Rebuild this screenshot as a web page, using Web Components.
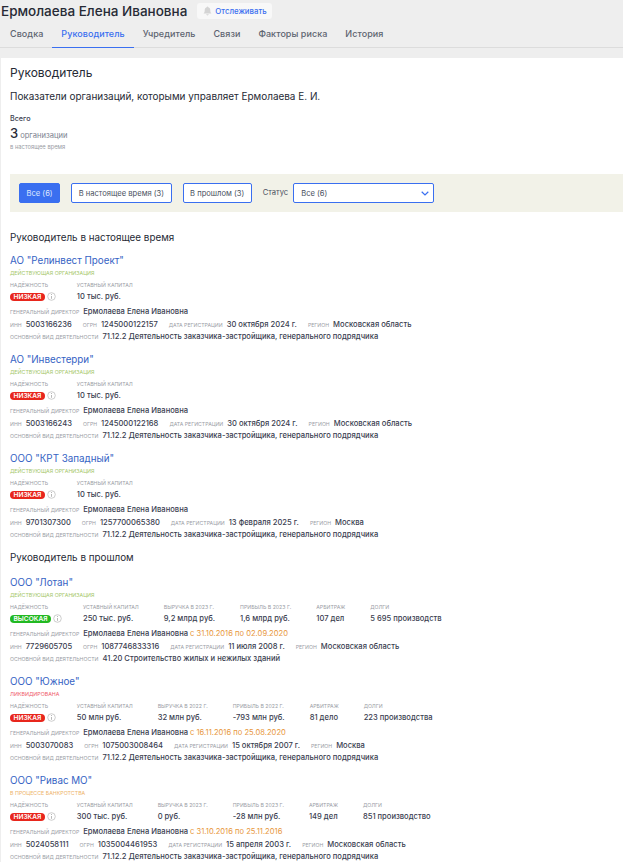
<!DOCTYPE html>
<html lang="ru">
<head>
<meta charset="utf-8">
<style>
    html, body { margin: 0; height: 862px; overflow: hidden; background: #eeeeee; }
    body { font-family: "Inter", "Noto Sans", sans-serif; color: #1f2433; }
</style>
</head>
<body>
<person-page></person-page>
<script>
const BLUE = "#3a6ff0";

class PersonHeader extends HTMLElement {
    connectedCallback() {
        this.shadow = this.attachShadow({ mode: "open" });
        this.shadow.innerHTML = `
            <style>
                :host { display: block; height: 48px; border-bottom: 1px solid #dcdcdc; box-sizing: border-box; }
                .top { display: flex; align-items: center; height: 22px; padding-left: 1px; padding-top: 0; }
                h1 { margin: 0; font-size: 13.5px; font-weight: 500; color: #262a35; white-space: nowrap; }
                .watch { display: flex; align-items: center; gap: 3px; margin-left: 10px; height: 16px; padding: 0 5px 0 6px; background: #f8f8f8; border-radius: 3px; font-size: 7.8px; font-weight: 500; color: ${BLUE}; }
                svg { display: block; }
                nav { display: flex; height: 25px; padding: 0 0 0 1px; }
                a { display: block; padding: 6px 9px 0; height: 19px; font-size: 9px; font-weight: 500; letter-spacing: .05px; color: #5d6470; }
                a.on { color: ${BLUE}; border-bottom: 1px solid ${BLUE}; }
            </style>
            <div class="top">
                <h1>Ермолаева Елена Ивановна</h1>
                <span class="watch">
                    <svg width="9" height="10" viewBox="0 0 9 10"><path fill="#d4d4d4" d="M4.5 0.5c.5 0 .8.3.8.8C6.6 1.7 7.3 2.8 7.3 4.2c0 1.7.4 2.6 1.2 3.4H.5c.8-.8 1.2-1.7 1.2-3.4 0-1.4.7-2.5 2-2.9 0-.5.3-.8.8-.8zM3.3 8.3h2.4c0 .7-.5 1.2-1.2 1.2s-1.2-.5-1.2-1.2z"/></svg>
                    Отслеживать
                </span>
            </div>
            <nav>
                <a>Сводка</a><a class="on">Руководитель</a><a>Учредитель</a><a>Связи</a><a>Факторы риска</a><a>История</a>
            </nav>
        `;
    }
}

class FilterBar extends HTMLElement {
    connectedCallback() {
        this.shadow = this.attachShadow({ mode: "open" });
        this.shadow.innerHTML = `
            <style>
                :host { display: flex; align-items: center; height: 38px; margin-left: 9px; padding-left: 9px; background: #f2f2e8; font-size: 7.6px; }
                button { font: inherit; height: 20px; box-sizing: border-box; padding: 0 6.5px; border: 1px solid ${BLUE}; border-radius: 2px; background: #fff; color: #4a5160; margin-right: 11px; white-space: nowrap; }
                button.on { background: ${BLUE}; color: #dfe8ff; }
                .lbl { color: #4a5160; margin: 0 5px 2px 0; }
                .sel { display: flex; align-items: center; justify-content: space-between; width: 141px; height: 20px; box-sizing: border-box; padding: 0 4px 0 7px; border: 1px solid ${BLUE}; border-radius: 2px; background: #fff; color: #4a5160; }
            </style>
            <button class="on">Все (6)</button>
            <button>В настоящее время (3)</button>
            <button>В прошлом (3)</button>
            <span class="lbl">Статус</span>
            <span class="sel">Все (6)
                <svg width="8" height="5" viewBox="0 0 8 5"><path fill="none" stroke="${BLUE}" stroke-width="1.2" d="M.7.8 4 4 7.3.8"/></svg>
            </span>
        `;
    }
}

class OrgCard extends HTMLElement {
    connectedCallback() {
        const data = JSON.parse(this.getAttribute("data"));
        const metrics = data.metrics.map(m => `<div><label>${m[0]}</label><b>${m[1]}</b></div>`).join("");
        const high = data.risk === "ВЫСОКАЯ";
        this.shadow = this.attachShadow({ mode: "open" });
        this.shadow.innerHTML = `
            <style>
                :host { display: block; height: 99px; box-sizing: border-box; padding-top: 2px; font-size: 7.6px; font-weight: 500; color: #3a4050; }
                .name { font-size: 9.8px; font-weight: 400; line-height: 13px; color: #3563c4; }
                .status { font-size: 5.3px; font-weight: 400; line-height: 10px; height: 12px; margin-top: 1px; text-transform: uppercase; color: ${data.color}; }
                label { font-size: 5.2px; font-weight: 400; color: #9a9da5; text-transform: uppercase; white-space: nowrap; }
                .metrics { display: flex; gap: 25px; height: 26px; }
                .metrics label { display: block; line-height: 10px; }
                .metrics b { display: block; font-weight: 500; line-height: 13px; white-space: nowrap; }
                .risk { display: flex; align-items: center; gap: 2px; height: 13px; margin-right: -4px; }
                .badge { height: 8px; line-height: 8px; padding: 0 3.5px; border-radius: 4px; font-size: 6.6px; font-weight: 600; color: #fff; background: ${high ? "#22b922" : "#e8261c"}; white-space: nowrap; }
                .row { display: flex; align-items: baseline; gap: 11px; height: 12.5px; line-height: 12.5px; white-space: nowrap; }
                .row span { display: flex; align-items: baseline; gap: 4px; }
                em { font-style: normal; color: #e8973c; font-weight: 400; margin-left: -2px; }
                svg { display: block; }
            </style>
            <div class="name">${data.name}</div>
            <div class="status">${data.status}</div>
            <div class="metrics">
                <div><label>Надёжность</label><div class="risk"><span class="badge">${data.risk}</span>
                    <svg width="9" height="9" viewBox="0 0 9 9"><circle cx="4.5" cy="4.5" r="3.8" fill="none" stroke="#b8b8b8" stroke-width=".7"/><path stroke="#b8b8b8" d="M4.5 4v2.8M4.5 2v1"/></svg></div></div>
                ${metrics}
            </div>
            <div class="row"><span><label>Генеральный директор</label>Ермолаева Елена Ивановна ${data.period ? `<em>${data.period}</em>` : ""}</span></div>
            <div class="row">
                <span><label>ИНН</label>${data.inn}</span>
                <span><label>ОГРН</label>${data.ogrn}</span>
                <span><label>Дата регистрации</label>${data.date}</span>
                <span><label>Регион</label>${data.region}</span>
            </div>
            <div class="row"><span><label>Основной вид деятельности</label>${data.okved}</span></div>
        `;
    }
}

const OKVED = "71.12.2 Деятельность заказчика-застройщика, генерального подрядчика";
const GREEN = "#a5c76a", RED = "#ef5a6a", ORANGE = "#eeb36a";
const ORGS_NOW = [
    { name: 'АО "Релинвест Проект"', status: "Действующая организация", color: GREEN, risk: "НИЗКАЯ", metrics: [["Уставный капитал", "10 тыс. руб."]], inn: "5003166236", ogrn: "1245000122157", date: "30 октября 2024 г.", region: "Московская область", okved: OKVED },
    { name: 'АО "Инвестерри"', status: "Действующая организация", color: GREEN, risk: "НИЗКАЯ", metrics: [["Уставный капитал", "10 тыс. руб."]], inn: "5003166243", ogrn: "1245000122168", date: "30 октября 2024 г.", region: "Московская область", okved: OKVED },
    { name: 'ООО "КРТ Западный"', status: "Действующая организация", color: GREEN, risk: "НИЗКАЯ", metrics: [["Уставный капитал", "10 тыс. руб."]], inn: "9701307300", ogrn: "1257700065380", date: "13 февраля 2025 г.", region: "Москва", okved: OKVED }
];
const ORGS_PAST = [
    { name: 'ООО "Лотан"', status: "Действующая организация", color: GREEN, risk: "ВЫСОКАЯ", metrics: [["Уставный капитал", "250 тыс. руб."], ["Выручка в 2023 г.", "9,2 млрд руб."], ["Прибыль в 2023 г.", "1,6 млрд руб."], ["Арбитраж", "107 дел"], ["Долги", "5 695 производств"]], period: "с 31.10.2016 по 02.09.2020", inn: "7729605705", ogrn: "1087746833316", date: "11 июля 2008 г.", region: "Московская область", okved: "41.20 Строительство жилых и нежилых зданий" },
    { name: 'ООО "Южное"', status: "Ликвидирована", color: RED, risk: "НИЗКАЯ", metrics: [["Уставный капитал", "50 млн руб."], ["Выручка в 2022 г.", "32 млн руб."], ["Прибыль в 2022 г.", "-793 млн руб."], ["Арбитраж", "81 дело"], ["Долги", "223 производства"]], period: "с 16.11.2016 по 25.08.2020", inn: "5003070083", ogrn: "1075003008464", date: "15 октября 2007 г.", region: "Москва", okved: OKVED },
    { name: 'ООО "Ривас МО"', status: "В процессе банкротства", color: ORANGE, risk: "НИЗКАЯ", metrics: [["Уставный капитал", "300 тыс. руб."], ["Выручка в 2023 г.", "0 руб."], ["Прибыль в 2023 г.", "-28 млн руб."], ["Арбитраж", "149 дел"], ["Долги", "851 производство"]], period: "с 31.10.2016 по 25.11.2016", inn: "5024058111", ogrn: "1035004461953", date: "15 апреля 2003 г.", region: "Московская область", okved: OKVED }
];

class PersonPage extends HTMLElement {
    connectedCallback() {
        this.shadow = this.attachShadow({ mode: "open" });
        const cards = list => list.map(o => `<org-card data='${JSON.stringify(o).replace(/'/g, "&#39;")}'></org-card>`).join("");
        this.shadow.innerHTML = `
            <style>
                :host { display: block; }
                .card { margin: 10px 0 0 1px; background: #fff; height: 804px; padding-top: 1px; }
                .in { padding-left: 9px; }
                h2 { margin: 0; padding-top: 6px; font-size: 12px; font-weight: 400; line-height: 15px; color: #262a35; }
                p { margin: 9px 0 0; font-size: 9.95px; line-height: 14px; color: #262a35; }
                .tot { margin-top: 11px; font-size: 7.2px; font-weight: 500; line-height: 10px; color: #3a4050; }
                .num { display: flex; align-items: baseline; gap: 2px; margin-top: 2px; line-height: 15px; font-size: 7.6px; color: #7d8390; }
                .num b { font-size: 13px; font-weight: 500; color: #262a35; }
                .sub { font-size: 5.8px; line-height: 10px; margin-top: -1px; color: #9a9da5; }
                h3 { margin: 0; font-size: 9.85px; font-weight: 400; line-height: 14px; color: #262a35; }
                filter-bar { margin-top: 22px; }
            </style>
            <person-header></person-header>
            <div class="card">
                <div class="in">
                    <h2>Руководитель</h2>
                    <p>Показатели организаций, которыми управляет Ермолаева Е. И.</p>
                    <div class="tot">Всего</div>
                    <div class="num"><b>3</b>организации</div>
                    <div class="sub">в настоящее время</div>
                </div>
                <filter-bar></filter-bar>
                <div class="in">
                    <h3 style="margin-top:18px;margin-bottom:8px">Руководитель в настоящее время</h3>
                    ${cards(ORGS_NOW)}
                    <h3 style="margin-top:1px;margin-bottom:10px">Руководитель в прошлом</h3>
                    ${cards(ORGS_PAST)}
                </div>
            </div>
        `;
    }
}

customElements.define("person-header", PersonHeader);
customElements.define("filter-bar", FilterBar);
customElements.define("org-card", OrgCard);
customElements.define("person-page", PersonPage);
</script>
</body>
</html>
